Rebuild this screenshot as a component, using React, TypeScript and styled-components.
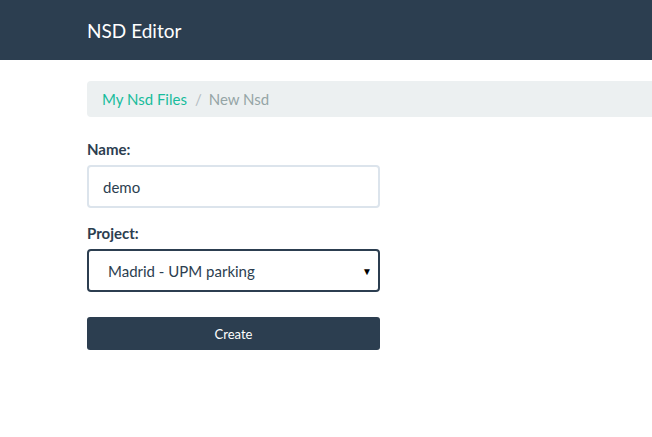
import styled, { createGlobalStyle } from "styled-components"

const Global = createGlobalStyle`
    body {
        margin: 0;
        background: #ffffff;
        font-family: Lato, "Liberation Sans", sans-serif;
        font-size: 15px;
        color: #2c3e50;
    }
`

const Navbar = styled.header`
    height: 60px;
    background: #2c3e50;
    display: flex;
    align-items: center;
    padding-left: 87px;
`

const Brand = styled.span`
    color: #ffffff;
    font-size: 19px;
    line-height: 21px;
`

const Main = styled.main`
    padding: 21px 0 0 87px;
`

const Breadcrumb = styled.nav`
    height: 36px;
    background: #ecf0f1;
    border-radius: 4px 0 0 4px;
    display: flex;
    align-items: center;
    padding-left: 15px;
    margin-bottom: 22px;
`

const Crumb = styled.span<{ $active?: boolean }>`
    color: ${p => (p.$active ? "#95a5a6" : "#18bc9c")};
`

const Divider = styled.span`
    color: #b4bcc2;
    padding: 0 7px 0 8px;
`

const Form = styled.form`
    width: 293px;
    display: flex;
    flex-direction: column;
`

const Label = styled.label`
    font-weight: bold;
    font-size: 15px;
    line-height: 20px;
    margin-bottom: 6px;
`

const Field = styled.div`
    display: flex;
    flex-direction: column;
    margin-bottom: 15px;
`

const Input = styled.div<{ $focus?: boolean }>`
    height: 43px;
    box-sizing: border-box;
    border: 2px solid ${p => (p.$focus ? "#2c3e50" : "#dce4ec")};
    border-radius: 4px;
    display: flex;
    align-items: center;
    justify-content: space-between;
    padding: 0 6px 0 14px;
    font-size: 15px;
    color: #2c3e50;
`

const SelectText = styled.span`
    padding-left: 5px;
`

const Caret = styled.span`
    font-size: 10px;
    color: #000000;
`

const Button = styled.button`
    margin-top: 10px;
    height: 33px;
    border: none;
    border-radius: 3px;
    background: #2c3e50;
    color: #ffffff;
    font-family: Lato, "Liberation Sans", sans-serif;
    font-size: 13px;
`

export default function App() {
    return <>
        <Global />
        <Navbar>
            <Brand>NSD Editor</Brand>
        </Navbar>
        <Main>
            <Breadcrumb>
                <Crumb>My Nsd Files</Crumb>
                <Divider>/</Divider>
                <Crumb $active>New Nsd</Crumb>
            </Breadcrumb>
            <Form>
                <Field>
                    <Label>Name:</Label>
                    <Input>demo</Input>
                </Field>
                <Field>
                    <Label>Project:</Label>
                    <Input $focus>
                        <SelectText>Madrid - UPM parking</SelectText>
                        <Caret>▼</Caret>
                    </Input>
                </Field>
                <Button type="button">Create</Button>
            </Form>
        </Main>
    </>
}
